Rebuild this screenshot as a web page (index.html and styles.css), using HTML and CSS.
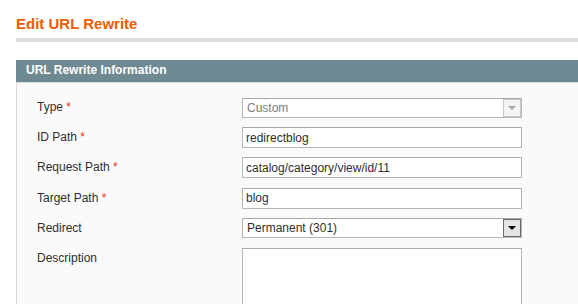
FILE: index.html
```html
<!DOCTYPE html>
<html lang="en">
<head>
    <meta charset="UTF-8">
    <title>Edit URL Rewrite</title>
    <link rel="stylesheet" href="styles.css">
</head>
<body>
    <div class="page">
        <div class="content-header">
            <h3>Edit URL Rewrite</h3>
        </div>
        <div class="entry-edit">
            <div class="section-head">URL Rewrite Information</div>
            <div class="fieldset">
                <div class="row">
                    <label>Type <span class="required">*</span></label>
                    <div class="select disabled">
                        <span class="value">Custom</span>
                        <span class="arrow"></span>
                    </div>
                </div>
                <div class="row">
                    <label for="id_path">ID Path <span class="required">*</span></label>
                    <input type="text" id="id_path" class="input-text" value="redirectblog">
                </div>
                <div class="row">
                    <label for="request_path">Request Path <span class="required">*</span></label>
                    <input type="text" id="request_path" class="input-text" value="catalog/category/view/id/11">
                </div>
                <div class="row">
                    <label for="target_path">Target Path <span class="required">*</span></label>
                    <input type="text" id="target_path" class="input-text" value="blog">
                </div>
                <div class="row">
                    <label>Redirect</label>
                    <div class="select">
                        <span class="value">Permanent (301)</span>
                        <span class="arrow"></span>
                    </div>
                </div>
                <div class="row row-top">
                    <label for="description">Description</label>
                    <textarea id="description" class="textarea"></textarea>
                </div>
            </div>
        </div>
    </div>
</body>
</html>
```

FILE: styles.css
```css
body {
    margin: 0;
    font-family: "Liberation Sans", Arial, sans-serif;
    font-size: 12px;
    color: #2f2f2f;
    background: #ffffff;
    overflow: hidden;
}
.page {
    padding-left: 16px;
}
.content-header {
    padding-top: 15px;
    border-bottom: 4px solid #dfdfdf;
    margin-bottom: 18px;
}
.content-header h3 {
    margin: 0 0 5px 0;
    font-size: 15px;
    line-height: 18px;
    font-weight: bold;
    color: #eb5e00;
}
.section-head {
    background: #6f8992;
    color: #ffffff;
    font-weight: bold;
    font-size: 12px;
    line-height: 20px;
    padding: 0 10px 2px 10px;
}
.fieldset {
    background: #fafafa;
    border-left: 1px solid #d6d6d6;
    border-top: 1px solid #d9dcdc;
    padding: 14px 20px 0 20px;
    height: 207px;
    overflow: hidden;
}
.row {
    display: flex;
    align-items: center;
    height: 21px;
    margin-bottom: 9.2px;
}
.row-top {
    align-items: flex-start;
}
.row-top label {
    padding-top: 3px;
}
.row label {
    width: 205px;
    flex: none;
    line-height: 15px;
}
.required {
    color: #eb340a;
}
.input-text {
    box-sizing: border-box;
    width: 280px;
    height: 21px;
    margin: 0;
    padding: 0 3px;
    border: 1px solid #b6b6b6;
    border-top-color: #aaaaaa;
    background: #ffffff;
    font-family: "Liberation Sans", Arial, sans-serif;
    font-size: 12px;
    color: #2f2f2f;
    outline: none;
}
.select {
    position: relative;
    box-sizing: border-box;
    width: 280px;
    height: 20px;
    border: 1px solid #b6b6b6;
    border-top-color: #a8a8a8;
    background: #ffffff;
    line-height: 18px;
    padding-left: 4px;
}
.select .value {
    font-size: 12px;
}
.select.disabled .value {
    color: #7d7d7d;
}
.select .arrow {
    position: absolute;
    top: 0;
    right: 0;
    width: 16px;
    height: 16px;
    border: 1px solid #6a6a6a;
    background: #e4e4e4;
}
.select .arrow::after {
    content: "";
    position: absolute;
    left: 4px;
    top: 6px;
    border-left: 4px solid transparent;
    border-right: 4px solid transparent;
    border-top: 4px solid #000000;
}
.select.disabled .arrow {
    border-color: #c9c9c9;
    background: #f4f4f4;
}
.select.disabled .arrow::after {
    border-top-color: #a8a8a8;
}
.textarea {
    box-sizing: border-box;
    width: 280px;
    height: 100px;
    margin: 0;
    border: 1px solid #b6b6b6;
    border-top-color: #aaaaaa;
    background: #ffffff;
    resize: none;
}
```
